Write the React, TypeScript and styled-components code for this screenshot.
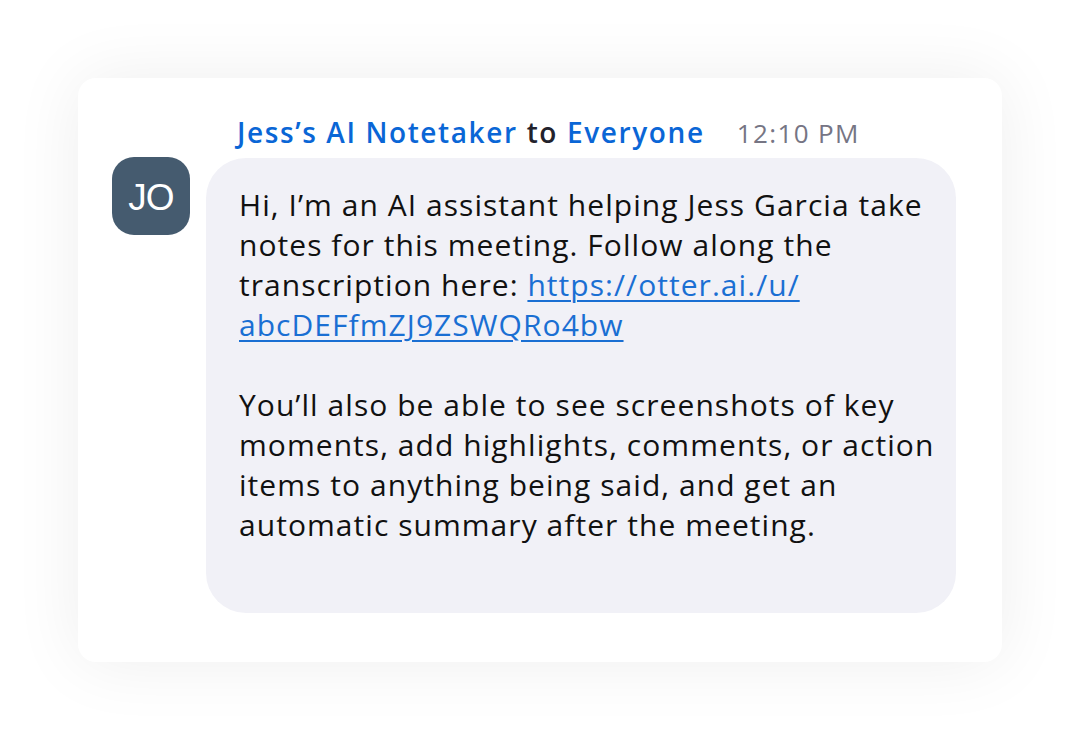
import styled, { createGlobalStyle } from "styled-components";

const GlobalStyle = createGlobalStyle`
  html, body {
    margin: 0;
    padding: 0;
    background: #fff;
  }
  body {
    font-family: "Open Sans", "Noto Sans", sans-serif;
  }
`;

const Page = styled.div`
  width: 1080px;
  height: 740px;
  display: flex;
  align-items: center;
  justify-content: center;
`;

const Card = styled.div`
  width: 924px;
  height: 584px;
  box-sizing: border-box;
  background: #fff;
  border-radius: 18px;
  box-shadow: 0 0 70px rgba(0, 0, 0, 0.07);
  display: flex;
  gap: 16px;
  padding: 34px 46px 49px 34px;
`;

const Avatar = styled.div`
  width: 78px;
  height: 78px;
  flex-shrink: 0;
  margin-top: 45px;
  border-radius: 22px;
  background: #455b6f;
  color: #fff;
  display: flex;
  align-items: center;
  justify-content: center;
  font-family: "Liberation Sans", Arial, sans-serif;
  font-size: 37px;
  letter-spacing: -1px;
  padding-top: 4px;
  box-sizing: border-box;
`;

const Content = styled.div`
  flex: 1;
  min-width: 0;
  display: flex;
  flex-direction: column;
`;

const Header = styled.div`
  display: flex;
  align-items: baseline;
  padding-left: 31px;
  height: 46px;
  font-size: 28px;
  line-height: 40px;
  letter-spacing: 1.6px;
`;

const Name = styled.span`
  color: #0a66d6;
  font-weight: 600;
`;

const To = styled.span`
  color: #22222c;
  font-weight: 600;
  margin: 0 9px;
`;

const Time = styled.span`
  color: #767584;
  font-size: 26px;
  margin-left: 32px;
  letter-spacing: 1.4px;
`;

const Bubble = styled.div`
  flex: 1;
  background: #f1f1f7;
  border-radius: 40px;
  padding: 27px 33px;
  color: #111;
  font-size: 30px;
  line-height: 40px;
  letter-spacing: 1.05px;
`;

const Para = styled.p`
  margin: 0 0 40px;
  white-space: nowrap;
`;

const Link = styled.a`
  color: #1a6fd3;
  text-decoration: underline;
  text-decoration-thickness: 1.5px;
  text-underline-offset: 4px;
`;

export default function App() {
  return (
    <>
      <GlobalStyle />
      <Page>
        <Card>
          <Avatar>JO</Avatar>
          <Content>
            <Header>
              <Name>Jess’s AI Notetaker</Name>
              <To>to</To>
              <Name>Everyone</Name>
              <Time>12:10 PM</Time>
            </Header>
            <Bubble>
              <Para>
                Hi, I’m an AI assistant helping Jess Garcia take
                <br />
                notes for this meeting. Follow along the
                <br />
                transcription here:{" "}
                <Link href="#">
                  https://otter.ai./u/
                  <br />
                  abcDEFfmZJ9ZSWQRo4bw
                </Link>
              </Para>
              <Para>
                You’ll also be able to see screenshots of key
                <br />
                moments, add highlights, comments, or action
                <br />
                items to anything being said, and get an
                <br />
                automatic summary after the meeting.
              </Para>
            </Bubble>
          </Content>
        </Card>
      </Page>
    </>
  );
}
